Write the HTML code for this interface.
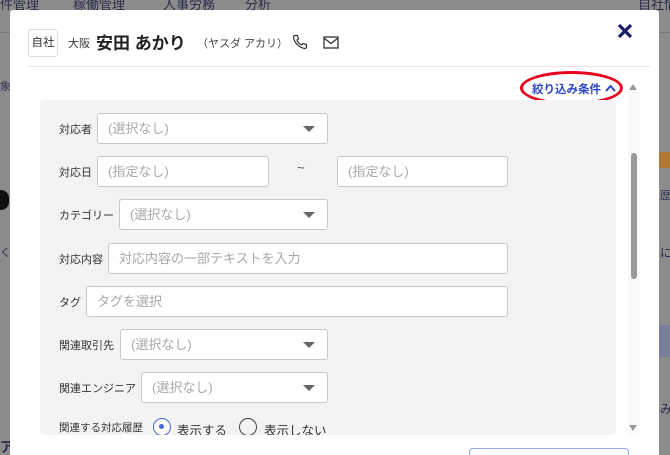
<!DOCTYPE html>
<html><head><meta charset="utf-8"><style>
*{box-sizing:border-box;margin:0;padding:0}
html,body{width:670px;height:455px;overflow:hidden}
body{position:relative;background:#8c8c8c;font-family:"Liberation Sans","Noto Sans CJK JP",sans-serif;color:#333}
.bg{position:absolute;color:#2a2a4a;font-size:13px;white-space:nowrap}
.modal{position:absolute;left:10px;top:10px;width:649px;height:445px;background:#fff;border-radius:3px 3px 0 0;overflow:hidden}
.a{position:absolute;white-space:nowrap}
.lbl{position:absolute;left:59px;font-size:11px;color:#333;white-space:nowrap}
.in{position:absolute;height:31px;background:#fff;border:1px solid #c8c8c8;border-radius:3px;font-size:13px;color:#a8a8a8;padding-left:10px;line-height:29px;white-space:nowrap}
.tri{position:absolute;right:12px;top:12px;width:0;height:0;border-left:6px solid transparent;border-right:6px solid transparent;border-top:6px solid #666}
</style></head><body>
<div class="bg" style="left:0;top:-6px">件管理</div>
<div class="bg" style="left:73px;top:-6px">稼働管理</div>
<div class="bg" style="left:163px;top:-6px">人事労務</div>
<div class="bg" style="left:245px;top:-6px">分析</div>
<div class="bg" style="left:638px;top:-6px">自社情</div>
<div class="a" style="left:0;top:32px;width:670px;height:1px;background:#777"></div>
<div class="bg" style="left:0;top:78px;font-size:11px;color:#335">象</div>
<div class="a" style="left:659px;top:152px;width:11px;height:16px;background:#b07830"></div>
<div class="bg" style="left:660px;top:187px;font-size:11px;color:#335">歴</div>
<div class="bg" style="left:660px;top:244px;font-size:12px">に担</div>
<div class="bg" style="left:0;top:244px;font-size:11px">く-</div>
<div class="a" style="left:0;top:190px;width:9px;height:20px;background:#111;border-radius:0 8px 8px 0"></div>
<div class="a" style="left:659px;top:325px;width:11px;height:32px;background:#76809a"></div>
<div class="bg" style="left:660px;top:400px;font-size:12px">み</div>
<div class="bg" style="left:0;top:437px;font-size:14px;font-weight:bold">ア</div>

<div class="modal">
 <div class="a" style="left:18px;top:19px;width:30px;height:28px;border:1px solid #ddd;border-radius:3px;font-size:11.5px;text-align:center;line-height:26px">自社</div>
 <div class="a" style="left:58px;top:25px;font-size:11px">大阪</div>
 <div class="a" style="left:86px;top:19px;font-size:17px;font-weight:bold;color:#222">安田 あかり</div>
 <div class="a" style="left:187px;top:25px;font-size:11px;color:#444">（ヤスダ アカリ）</div>
 <svg class="a" style="left:282px;top:24px" width="16" height="16" viewBox="0 0 16 16"><path d="M3 1.5 L5.5 1.5 L6.5 5 L5 6.2 C6 8.5 7.5 10 9.8 11 L11 9.5 L14.5 10.5 L14.5 13 C14.5 14 13.5 14.7 12.5 14.5 C7 13.5 2.5 9 1.5 3.5 C1.3 2.5 2 1.5 3 1.5Z" fill="none" stroke="#333" stroke-width="1.2"/></svg>
 <svg class="a" style="left:313px;top:26px" width="16" height="13" viewBox="0 0 16 13"><rect x="1" y="1" width="14" height="11" fill="none" stroke="#333" stroke-width="1.3"/><path d="M1 2 L8 7.5 L15 2" fill="none" stroke="#333" stroke-width="1.3"/></svg>
 <svg class="a" style="left:607px;top:13px" width="16" height="16" viewBox="0 0 16 16"><path d="M2 2 L14 14 M14 2 L2 14" stroke="#1c1c6e" stroke-width="3.2"/></svg>
 <div class="a" style="left:18px;top:56px;width:622px;height:1px;background:#e6e6e6"></div>
 <div class="a" style="left:510px;top:61px;width:103px;height:34px;border:3px solid #e8001c;border-radius:50%"></div>
 <div class="a" style="left:522px;top:71px;font-size:11.5px;color:#2f48c8;font-weight:bold">絞り込み条件</div>
 <svg class="a" style="left:595px;top:74px" width="11" height="8" viewBox="0 0 11 8"><path d="M1 7 L5.5 2 L10 7" fill="none" stroke="#2f48c8" stroke-width="2"/></svg>
 <div class="a" style="left:30px;top:90px;width:576px;height:335px;background:#f3f3f5;border-radius:4px"></div>
 <div class="a" style="left:618px;top:80px;width:12px;height:345px;background:#fafafa"></div>
 <div class="a" style="left:619px;top:74px;width:0;height:0;border-left:4px solid transparent;border-right:4px solid transparent;border-bottom:6px solid #999"></div>
 <div class="a" style="left:619px;top:415px;width:0;height:0;border-left:4px solid transparent;border-right:4px solid transparent;border-top:6px solid #999"></div>
 <div class="a" style="left:621px;top:143px;width:6px;height:126px;background:#999;border-radius:3px"></div>
</div>

<div class="lbl" style="top:121px">対応者</div>
<div class="in" style="left:97px;top:113px;width:231px">(選択なし)<div class="tri"></div></div>
<div class="lbl" style="top:164px">対応日</div>
<div class="in" style="left:97px;top:156px;width:172px">(指定なし)</div>
<div class="a" style="left:297px;top:160px;font-size:13px;color:#555">~</div>
<div class="in" style="left:337px;top:156px;width:171px">(指定なし)</div>
<div class="lbl" style="top:207px">カテゴリー</div>
<div class="in" style="left:119px;top:199px;width:209px">(選択なし)<div class="tri"></div></div>
<div class="lbl" style="top:251px">対応内容</div>
<div class="in" style="left:108px;top:243px;width:400px">対応内容の一部テキストを入力</div>
<div class="lbl" style="top:294px">タグ</div>
<div class="in" style="left:86px;top:286px;width:422px">タグを選択</div>
<div class="lbl" style="top:337px">関連取引先</div>
<div class="in" style="left:120px;top:329px;width:208px">(選択なし)<div class="tri"></div></div>
<div class="lbl" style="top:380px">関連エンジニア</div>
<div class="in" style="left:141px;top:372px;width:187px">(選択なし)<div class="tri"></div></div>
<div class="lbl" style="top:420px;font-size:10.5px">関連する対応履歴</div>
<div class="a" style="left:153px;top:418px;width:18px;height:18px;border:1.5px solid #4a66d8;border-radius:50%;background:#fff"><div style="position:absolute;left:5px;top:5px;width:5px;height:5px;border-radius:50%;background:#4a66d8"></div></div>
<div class="a" style="left:177px;top:420px;font-size:12.5px">表示する</div>
<div class="a" style="left:239px;top:418px;width:18px;height:18px;border:1.5px solid #444;border-radius:50%"></div>
<div class="a" style="left:264px;top:420px;font-size:12.5px">表示しない</div>
<div class="a" style="left:40px;top:435px;width:576px;height:20px;background:#fff"></div>
<div class="a" style="left:469px;top:448px;width:160px;height:7px;border:1px solid #8fa6e8;border-bottom:none;border-radius:4px 4px 0 0;background:#fff"></div>
</body></html>
